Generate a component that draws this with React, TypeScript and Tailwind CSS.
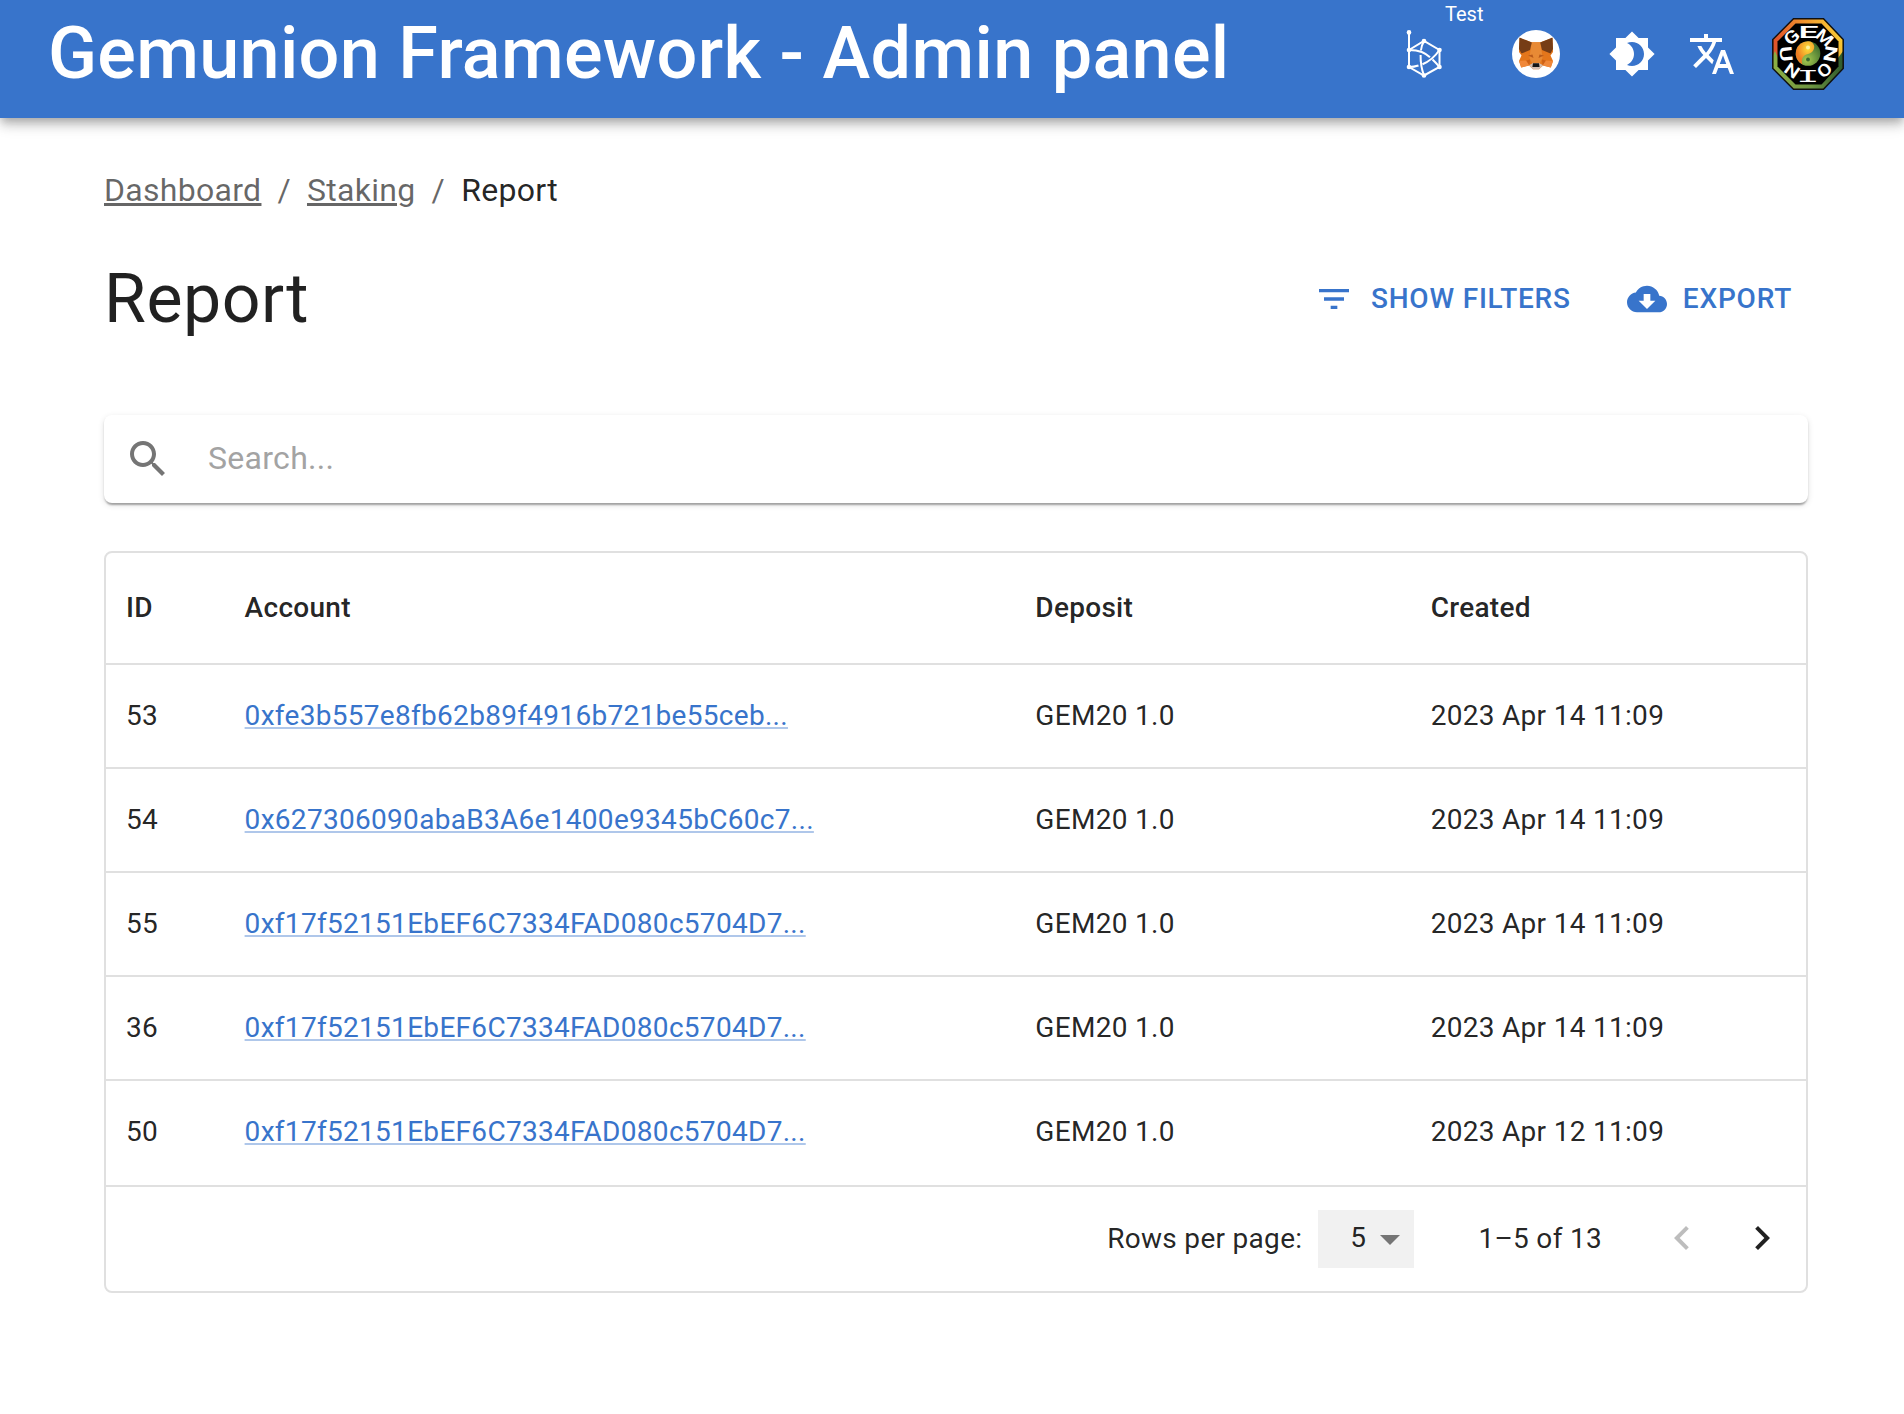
import React from "react";

const columns = "grid grid-cols-[0.3fr_2fr_1fr_1fr]";

const rows = [
  { id: "53", account: "0xfe3b557e8fb62b89f4916b721be55ceb...", deposit: "GEM20 1.0", created: "2023 Apr 14 11:09" },
  { id: "54", account: "0x627306090abaB3A6e1400e9345bC60c7...", deposit: "GEM20 1.0", created: "2023 Apr 14 11:09" },
  { id: "55", account: "0xf17f52151EbEF6C7334FAD080c5704D7...", deposit: "GEM20 1.0", created: "2023 Apr 14 11:09" },
  { id: "36", account: "0xf17f52151EbEF6C7334FAD080c5704D7...", deposit: "GEM20 1.0", created: "2023 Apr 14 11:09" },
  { id: "50", account: "0xf17f52151EbEF6C7334FAD080c5704D7...", deposit: "GEM20 1.0", created: "2023 Apr 12 11:09" },
];

function Icon({ d, className = "" }: { d: string; className?: string }) {
  return (
    <svg viewBox="0 0 24 24" fill="currentColor" className={"block shrink-0 " + className}>
      <path d={d} />
    </svg>
  );
}

const paths = {
  brightness:
    "M20 8.69V4h-4.69L12 .69 8.69 4H4v4.69L.69 12 4 15.31V20h4.69L12 23.31 15.31 20H20v-4.69L23.31 12 20 8.69zM12 18c-.89 0-1.74-.2-2.5-.55C11.56 16.5 13 14.42 13 12s-1.44-4.5-3.5-5.45C10.26 6.2 11.11 6 12 6c3.31 0 6 2.69 6 6s-2.69 6-6 6z",
  translate:
    "M12.87 15.07l-2.54-2.51.03-.03c1.74-1.94 2.98-4.17 3.71-6.53H17V4h-7V2H8v2H1v1.99h11.17C11.5 7.92 10.44 9.75 9 11.35 8.07 10.32 7.3 9.19 6.69 8h-2c.73 1.63 1.73 3.17 2.98 4.56l-5.09 5.02L4 19l5-5 3.11 3.11.76-2.04zM18.5 10h-2L12 22h2l1.12-3h4.75L21 22h2l-4.5-12zm-2.62 7l1.62-4.33L19.12 17h-3.24z",
  filter: "M10 18h4v-2h-4v2zM3 6v2h18V6H3zm3 7h12v-2H6v2z",
  cloud:
    "M19.35 10.04C18.67 6.59 15.64 4 12 4 9.11 4 6.6 5.64 5.35 8.04 2.34 8.36 0 10.91 0 14c0 3.31 2.69 6 6 6h13c2.76 0 5-2.24 5-5 0-2.64-2.05-4.78-4.65-4.96zM17 13l-5 5-5-5h3V9h4v4h3z",
  search:
    "M15.5 14h-.79l-.28-.27C15.41 12.59 16 11.11 16 9.5 16 5.91 13.09 3 9.5 3S3 5.91 3 9.5 5.91 16 9.5 16c1.61 0 3.09-.59 4.23-1.57l.27.28v.79l5 4.99L20.49 19l-4.99-5zm-6 0C7.01 14 5 11.99 5 9.5S7.01 5 9.5 5 14 7.01 14 9.5 11.99 14 9.5 14z",
  dropdown: "M7 10l5 5 5-5z",
  left: "M15.41 16.59 10.83 12l4.58-4.59L14 6l-6 6 6 6 1.41-1.41z",
  right: "M8.59 16.59 13.17 12 8.59 7.41 10 6l6 6-6 6-1.41-1.41z",
};

function NetworkIcon() {
  return (
    <svg viewBox="0 0 48 48" fill="none" stroke="#fff" strokeWidth="2" className="block h-12 w-12">
      <path d="M9 2.5V37L24 45.5L39.5 37V20L24 11L9 20" />
      <path d="M9 20C20 20 25 23 30 27.3M32.5 29.5C35 32 37.5 34.5 39.5 37" />
      <path d="M39.5 20C34 28 28 32 22.5 34.2M18.5 35.5C15.5 36.5 12 37 9 37" />
      <path d="M24 11C22 14.5 21.2 17.5 20.9 20.5M20.6 25C20.5 32 21.5 39 24 45.5" />
      <g fill="#fff" stroke="none">
        <circle cx="9" cy="2.4" r="2.3" />
        <circle cx="9" cy="20" r="2.3" />
        <circle cx="9" cy="37" r="2.3" />
        <circle cx="24" cy="11" r="2.3" />
        <circle cx="39.5" cy="20" r="2.3" />
        <circle cx="39.5" cy="37" r="2.3" />
        <circle cx="24" cy="45.5" r="2.3" />
      </g>
    </svg>
  );
}

function FoxIcon() {
  return (
    <svg viewBox="0 0 48 48" className="block h-12 w-12">
      <circle cx="24" cy="24" r="24" fill="#fff" />
      <path d="M7.5 8L19.5 12.3H28.5L40.5 8L41 22L38.5 25.5L41 31L38.8 37.5L31 35.5L27 39.2H21L17 35.5L9.2 37.5L7 31L9.5 25.5L7 22Z" fill="#e4761b" />
      <path d="M19.5 12.3H28.5L30.5 28L27.5 34H20.5L17.5 28Z" fill="#e88a35" />
      <path d="M7.5 7.5L19.8 12.6L18 20L9.5 23.5L7 19Z" fill="#763d16" />
      <path d="M40.5 7.5L28.2 12.6L30 20L38.5 23.5L41 19Z" fill="#763d16" />
      <path d="M7 31L16 30.5L17 35.5L9.2 37.5Z" fill="#f0883a" />
      <path d="M41 31L32 30.5L31 35.5L38.8 37.5Z" fill="#f0883a" />
      <path d="M14 30.5L18 29.5L17.5 35.5Z" fill="#cd6116" />
      <path d="M34 30.5L30 29.5L30.5 35.5Z" fill="#cd6116" />
      <path d="M16 25.5L20.5 24.5L21.5 28Z" fill="#b85a1c" />
      <path d="M32 25.5L27.5 24.5L26.5 28Z" fill="#b85a1c" />
      <path d="M17 35.2L21 33H27L31 35.2L27 39.2H21Z" fill="#d5bfb2" />
      <path d="M21 33.3H27L27.6 37H20.4Z" fill="#161616" />
    </svg>
  );
}

const emblem = [
  { c: "G", x: 19.5, y: 19, r: -42, sx: 1.3 },
  { c: "E", x: 36.5, y: 13.8, r: 0, sx: 2.1 },
  { c: "M", x: 52.5, y: 19.5, r: 42, sx: 1.15 },
  { c: "U", x: 14, y: 36, r: 84, sx: 1.4 },
  { c: "N", x: 20, y: 52.5, r: 35, sx: 1.2 },
  { c: "O", x: 52.5, y: 52, r: -42, sx: 1.2 },
  { c: "N", x: 58.5, y: 36, r: -80, sx: 1.4 },
];

function Emblem() {
  return (
    <svg viewBox="0 0 72 72" className="block h-[72px] w-[72px]">
      <defs>
        <linearGradient id="warm" x1="0" x2="1" y1="0.2" y2="0">
          <stop offset="0" stopColor="#e0562a" />
          <stop offset="0.5" stopColor="#f39a2e" />
          <stop offset="1" stopColor="#fbd836" />
        </linearGradient>
        <linearGradient id="cool" x1="0" x2="1">
          <stop offset="0" stopColor="#8db044" />
          <stop offset="0.55" stopColor="#6d9440" />
          <stop offset="1" stopColor="#2f5a2c" />
        </linearGradient>
        <radialGradient id="sun" cx="0.65" cy="0.3" r="0.6">
          <stop offset="0" stopColor="#fbe03a" />
          <stop offset="1" stopColor="#f07d22" />
        </radialGradient>
        <radialGradient id="leaf" cx="0.45" cy="0.75" r="0.7">
          <stop offset="0" stopColor="#a5c94e" />
          <stop offset="1" stopColor="#3f6f30" />
        </radialGradient>
      </defs>
      <path d="M21.5 .8H51.5L71.2 21.5V50.5L51.5 71.2H21.5L.8 50.5V21.5Z" fill="url(#cool)" />
      <path d="M.8 38V21.5L21.5 .8H51.5L71.2 21.5V33L66 40H6L3 33Z" fill="url(#warm)" />
      <path d="M21.5 .8H51.5L71.2 21.5V50.5L51.5 71.2H21.5L.8 50.5V21.5Z" fill="none" stroke="#101010" strokeWidth="1.5" />
      <path d="M23.5 5.5H49.5L66.5 23.5V48.5L49.5 66.5H23.5L5.5 48.5V23.5Z" fill="#000" />
      <circle cx="36" cy="35.5" r="12.3" fill="url(#leaf)" />
      <path
        d="M36 23.2A12.3 12.3 0 0 0 30.5 46.5C28.5 41.500 31 37 36 36C40.500 35 42.500 31.500 42.200 28A6.300 6.300 0 0 0 36 23.200Z"
        fill="url(#sun)"
      />
      <circle cx="36" cy="29.500" r="2" fill="#fdf3a0" />
      <circle cx="36" cy="41.500" r="1.900" fill="#3a682f" />
      {emblem.map((l, i) => (
        <text
          key={i}
          transform={`translate(${l.x} ${l.y}) rotate(${l.r}) scale(${l.sx} 1)`}
          textAnchor="middle"
          y="6"
          fill="#fff"
          className="font-['Roboto'] text-[17px] font-semibold"
        >
          {l.c}
        </text>
      ))}
      <text transform="translate(36 58.500) scale(2.500 1)" textAnchor="middle" y="5.500" fill="#fff" className="font-['DejaVu_Sans_Mono'] text-[15.500px]">
        I
      </text>
    </svg>
  );
}

function AppHeader() {
  return (
    <header className="relative flex h-[118px] items-start justify-between bg-[#3874cb] pl-12 pr-[60px] text-white shadow-[0_4px_8px_-2px_rgba(0,0,0,0.2),0_8px_10px_0_rgba(0,0,0,0.14),0_2px_20px_0_rgba(0,0,0,0.12)]">
      <h1 className="mt-3 whitespace-nowrap text-[72px] font-medium leading-[84px] tracking-[0.0042em]">
        Gemunion Framework - Admin panel
      </h1>
      <div className="flex h-[108px] items-center">
        <div className="relative mr-[64px]">
          <NetworkIcon />
          <span className="absolute left-[45px] top-[-28px] text-[20px] leading-[24px]">Test</span>
        </div>
        <div className="mr-12">
          <FoxIcon />
        </div>
        <Icon d={paths.brightness} className="mr-8 h-12 w-12" />
        <Icon d={paths.translate} className="mr-9 h-12 w-12" />
        <Emblem />
      </div>
    </header>
  );
}

function PageActions() {
  return (
    <div className="flex items-center pr-4 text-[28px] font-medium leading-[49px] tracking-[0.02857em] text-[#3874cb]">
      <button className="mr-14 flex items-center gap-[17px]">
        <Icon d={paths.filter} className="h-10 w-10" />
        <span className="pb-0.5">SHOW FILTERS</span>
      </button>
      <button className="flex items-center gap-4">
        <Icon d={paths.cloud} className="h-10 w-10" />
        <span className="pb-0.5">EXPORT</span>
      </button>
    </div>
  );
}

function DataTable() {
  return (
    <section className="mt-12 rounded-lg border-2 border-[#e0e0e0] text-[28px] leading-[40px] tracking-[0.01071em]">
      <div className={columns + " h-[112px] items-center border-b-2 border-[#e0e0e0] font-medium"}>
        <div className="px-5">ID</div>
        <div className="px-5">Account</div>
        <div className="px-5">Deposit</div>
        <div className="px-5">Created</div>
      </div>
      {rows.map((row) => (
        <div key={row.id} className={columns + " h-[104px] items-center border-b-2 border-[#e0e0e0] last-of-type:border-transparent"}>
          <div className="px-5">{row.id}</div>
          <div className="px-5">
            <a className="text-[#3874cb] underline decoration-[#3874cb]/40 decoration-2 underline-offset-[2px] [text-decoration-skip-ink:none]">
              {row.account}
            </a>
          </div>
          <div className="px-5">{row.deposit}</div>
          <div className="px-5">{row.created}</div>
        </div>
      ))}
      <footer className="flex h-[106px] items-center justify-end border-t-2 border-[#e0e0e0] pr-5">
        <span>Rows per page:</span>
        <div className="ml-4 flex h-[58px] w-24 items-center justify-end bg-[#f1f1f1]">
          <span className="pb-0.5">5</span>
          <Icon d={paths.dropdown} className="h-12 w-12 text-[#757575]" />
        </div>
        <span className="ml-16">1–5 of 13</span>
        <Icon d={paths.left} className="mb-0.5 ml-[56px] h-12 w-12 text-black/26" />
        <Icon d={paths.right} className="mb-0.5 ml-8 h-12 w-12" />
      </footer>
    </section>
  );
}

export default function App() {
  return (
    <div className="min-h-[1414px] bg-white font-['Roboto',sans-serif] text-black/87">
      <AppHeader />
      <main className="px-[96px] pl-[104px] pt-[48px]">
        <nav className="flex text-[32px] leading-[48px] tracking-[0.00938em] text-black/60">
          <a className="underline decoration-[3px]">Dashboard</a>
          <span className="mx-4">/</span>
          <a className="underline decoration-[3px]">Staking</a>
          <span className="mx-4">/</span>
          <span className="text-black/87">Report</span>
        </nav>
        <div className="mt-[43px] flex items-center justify-between">
          <h2 className="text-[68px] leading-[84px] tracking-[0.00735em]">Report</h2>
          <PageActions />
        </div>
        <div className="mt-[74px] flex h-[88px] items-center rounded-lg bg-white pl-5 shadow-[0_4px_2px_-2px_rgba(0,0,0,0.2),0_2px_2px_0_rgba(0,0,0,0.14),0_2px_6px_0_rgba(0,0,0,0.12)]">
          <Icon d={paths.search} className="h-12 w-12 text-[#757575]" />
          <input
            placeholder="Search..."
            className="mb-0.5 ml-9 flex-1 bg-transparent text-[32px] leading-[46px] tracking-[0.00938em] outline-none placeholder:text-[#a3a3a3]"
          />
        </div>
        <DataTable />
      </main>
    </div>
  );
}
